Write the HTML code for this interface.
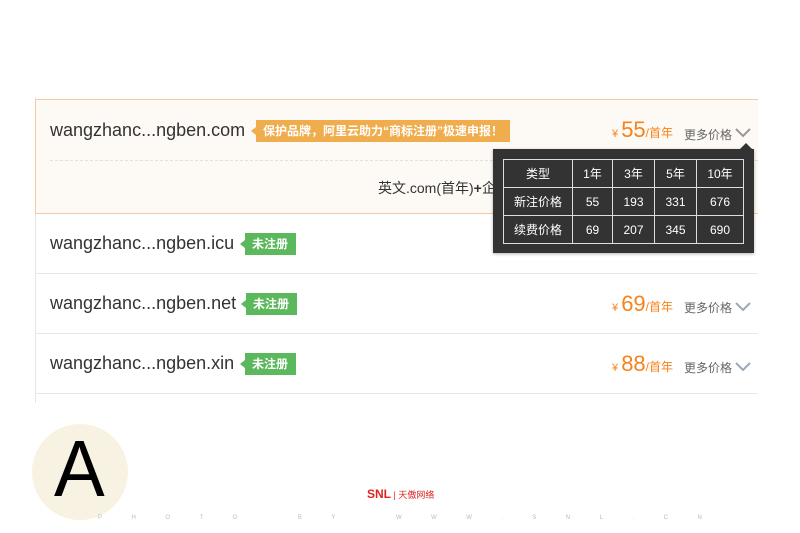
<!DOCTYPE html>
<html><head><meta charset="utf-8"><style>
*{margin:0;padding:0;box-sizing:border-box}
body{width:800px;height:533px;background:#fff;position:relative;overflow:hidden;font-family:"Liberation Sans","Noto Sans CJK SC",sans-serif}
.a{position:absolute}
.dom{position:absolute;left:50px;font-size:18px;color:#333;white-space:nowrap}
.tag{position:absolute;height:22px;line-height:22px;color:#fff;font-size:12px;font-weight:bold;padding:0 7px;white-space:nowrap}
.tag:before{content:"";position:absolute;left:-5px;top:7px;border:4px solid transparent;border-right:1px solid;border-right-width:5px;border-left:0}
.g{background:#5cb85c}.g:before{border-right-color:#5cb85c}
.o{background:#f0ad4e}.o:before{border-right-color:#f0ad4e}
.price{position:absolute;left:612px;color:#f7821b;white-space:nowrap}
.price .y{font-size:11px}.price .n{font-size:22px}.price .u{font-size:12px}
.more{position:absolute;left:684px;font-size:12px;color:#666;white-space:nowrap}
.chev{position:absolute;width:16px;height:10px}
.sep{position:absolute;left:35px;width:723px;height:1px;background:#e8e8e8}
table{border-collapse:collapse;position:absolute;left:503px;top:159px;color:#fff;font-size:12px}
td{border:1px solid #ddd;height:28px;text-align:center}
</style></head><body>
<div class="a" style="left:35px;top:97px;width:1px;height:306px;background:#e6e6e6"></div>
<div class="a" style="left:35px;top:99px;width:723px;height:115px;background:#fdf9f4;border:1px solid #f8c9a0;border-right:none"></div>
<div class="a" style="left:50px;top:160px;width:708px;border-top:1px dashed #e5e0da"></div>
<div class="dom" style="top:120px">wangzhanc...ngben.com</div>
<div class="tag o" style="left:256px;top:120px;width:254px">保护品牌，阿里云助力“商标注册”极速申报！</div>
<div class="price" style="top:117px"><span class="y">¥ </span><span class="n">55</span><span class="u">/首年</span></div>
<div class="more" style="top:126px">更多价格</div>
<svg class="chev" style="left:735px;top:128px" viewBox="0 0 16 10"><path d="M1 1 L8 8 L15 1" fill="none" stroke="#999" stroke-width="2"/></svg>
<div class="a" style="left:378px;top:178px;font-size:14px;color:#333;white-space:nowrap">英文.com(首年)<b>+</b>企</div>

<div class="dom" style="top:233px">wangzhanc...ngben.icu</div>
<div class="tag g" style="left:245px;top:233px;width:51px">未注册</div>
<div class="sep" style="top:273px"></div>
<div class="dom" style="top:293px">wangzhanc...ngben.net</div>
<div class="tag g" style="left:246px;top:293px;width:51px">未注册</div>
<div class="price" style="top:291px"><span class="y">¥ </span><span class="n">69</span><span class="u">/首年</span></div>
<div class="more" style="top:299px">更多价格</div>
<svg class="chev" style="left:735px;top:302px" viewBox="0 0 16 10"><path d="M1 1 L8 8 L15 1" fill="none" stroke="#9ab" stroke-width="2"/></svg>
<div class="sep" style="top:333px"></div>
<div class="dom" style="top:353px">wangzhanc...ngben.xin</div>
<div class="tag g" style="left:245px;top:353px;width:51px">未注册</div>
<div class="price" style="top:351px"><span class="y">¥ </span><span class="n">88</span><span class="u">/首年</span></div>
<div class="more" style="top:359px">更多价格</div>
<svg class="chev" style="left:735px;top:362px" viewBox="0 0 16 10"><path d="M1 1 L8 8 L15 1" fill="none" stroke="#9ab" stroke-width="2"/></svg>
<div class="sep" style="top:393px"></div>

<div class="a" style="left:493px;top:149px;width:261px;height:104px;background:#333;box-shadow:0 1px 3px rgba(0,0,0,.3)"></div>
<div class="a" style="left:740px;top:143px;border:6px solid transparent;border-bottom-color:#333;border-top:0"></div>
<table>
<tr><td style="width:69px">类型</td><td style="width:40px">1年</td><td style="width:42px">3年</td><td style="width:42px">5年</td><td style="width:47px">10年</td></tr>
<tr><td>新注价格</td><td>55</td><td>193</td><td>331</td><td>676</td></tr>
<tr><td>续费价格</td><td>69</td><td>207</td><td>345</td><td>690</td></tr>
</table>

<div class="a" style="left:32px;top:424px;width:96px;height:96px;border-radius:50%;background:#f8f2e2"></div>
<div class="a" style="left:54px;top:429px;font-size:80px;line-height:80px;color:#000;font-family:'Liberation Sans',sans-serif;transform:scaleX(.95);transform-origin:0 0">A</div>
<div class="a" style="left:367px;top:487px;font-size:12px;font-weight:bold;color:#d22;white-space:nowrap">SNL<span style="font-size:9px;font-weight:normal"> | 天傲网络</span></div>
<div class="a" style="left:98px;top:515px;font-size:6px;color:#bbb;letter-spacing:29.5px;white-space:nowrap">PHOTO BY WWW.SNL.CN</div>
</body></html>
